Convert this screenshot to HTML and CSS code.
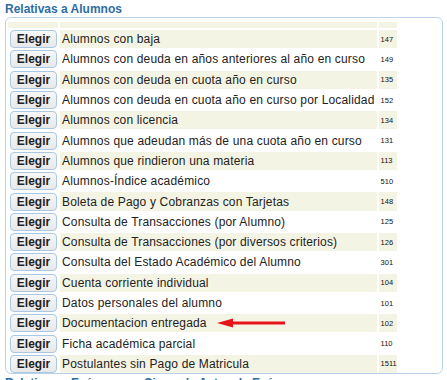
FILE: index.html
```html
<!DOCTYPE html>
<html lang="es">
<head>
  <meta charset="UTF-8" />
  <title>Reportes</title>
  <link rel="stylesheet" href="styles.css">
</head>
<body>
  <h3 class="group-title">Relativas a Alumnos</h3>
  <div class="group-box">
    <table class="report-list">
      <tr class="head"><th></th><th></th><th></th></tr>
      <tr class="odd"><td class="pick"><button>Elegir</button></td><td class="name">Alumnos con baja</td><td class="code">147</td></tr>
      <tr><td class="pick"><button>Elegir</button></td><td class="name">Alumnos con deuda en años anteriores al año en curso</td><td class="code">149</td></tr>
      <tr class="odd"><td class="pick"><button>Elegir</button></td><td class="name">Alumnos con deuda en cuota año en curso</td><td class="code">135</td></tr>
      <tr><td class="pick"><button>Elegir</button></td><td class="name">Alumnos con deuda en cuota año en curso por Localidad</td><td class="code">152</td></tr>
      <tr class="odd"><td class="pick"><button>Elegir</button></td><td class="name">Alumnos con licencia</td><td class="code">134</td></tr>
      <tr><td class="pick"><button>Elegir</button></td><td class="name">Alumnos que adeudan más de una cuota año en curso</td><td class="code">131</td></tr>
      <tr class="odd"><td class="pick"><button>Elegir</button></td><td class="name">Alumnos que rindieron una materia</td><td class="code">113</td></tr>
      <tr><td class="pick"><button>Elegir</button></td><td class="name">Alumnos-Índice académico</td><td class="code">510</td></tr>
      <tr class="odd"><td class="pick"><button>Elegir</button></td><td class="name">Boleta de Pago y Cobranzas con Tarjetas</td><td class="code">148</td></tr>
      <tr><td class="pick"><button>Elegir</button></td><td class="name">Consulta de Transacciones (por Alumno)</td><td class="code">125</td></tr>
      <tr class="odd"><td class="pick"><button>Elegir</button></td><td class="name">Consulta de Transacciones (por diversos criterios)</td><td class="code">126</td></tr>
      <tr><td class="pick"><button>Elegir</button></td><td class="name">Consulta del Estado Académico del Alumno</td><td class="code">301</td></tr>
      <tr class="odd"><td class="pick"><button>Elegir</button></td><td class="name">Cuenta corriente individual</td><td class="code">104</td></tr>
      <tr><td class="pick"><button>Elegir</button></td><td class="name">Datos personales del alumno</td><td class="code">101</td></tr>
      <tr class="odd"><td class="pick"><button>Elegir</button></td><td class="name">Documentacion entregada<svg class="arrow" width="68" height="10" viewBox="0 0 68 10"><polygon points="0,5 16,0.5 16,9.5" fill="#e8141a"/><rect x="14" y="3.5" width="54" height="3" fill="#e8141a"/></svg></td><td class="code">102</td></tr>
      <tr><td class="pick"><button>Elegir</button></td><td class="name">Ficha académica parcial</td><td class="code">110</td></tr>
      <tr class="odd"><td class="pick"><button>Elegir</button></td><td class="name">Postulantes sin Pago de Matricula</td><td class="code">1511</td></tr>
    </table>
  </div>
  <h3 class="group-title">Relativas a Exámenes y Cierre de Actas de Exámenes</h3>
</body>
</html>
```

FILE: styles.css
```css
body {
  margin: 0;
  padding: 0 4px 0 5px;
  font-family: "Liberation Sans", Arial, sans-serif;
  font-size: 12px;
  color: #222;
  background: #fff;
  overflow: hidden;
}

.group-title {
  margin: 0;
  padding-top: 2px;
  height: 15px;
  line-height: 15px;
  font-size: 12px;
  font-weight: bold;
  color: #2e6da4;
  white-space: nowrap;
}

.group-box {
  border: 1px solid #b9d3ea;
  border-radius: 6px;
  padding-top: 2px;
  height: 353px;
}

.report-list {
  border-spacing: 2px;
}

.report-list tr.head th {
  height: 6px;
  padding: 0;
  background: #f4f4e4;
}

.report-list td {
  padding: 0;
  height: 18.3px;
  white-space: nowrap;
}

.report-list tr.odd td.name,
.report-list tr.odd td.code {
  background: #f4f4e4;
}

td.pick {
  padding: 0 1px 0 2px;
}

td.pick button {
  display: block;
  width: 47px;
  height: 18px;
  padding: 0;
  border: 1px solid #a9c8e4;
  border-radius: 4px;
  background: linear-gradient(#f7f7f7, #e8e8e8);
  font-family: "Liberation Sans", Arial, sans-serif;
  font-size: 12px;
  font-weight: bold;
  color: #222;
  cursor: pointer;
}

td.name {
  padding: 0 2px 0 2px;
  letter-spacing: 0.17px;
}

td.code {
  width: 16px;
  padding: 0 0 0 2px;
  font-size: 7.5px;
  color: #111;
}

.arrow {
  vertical-align: middle;
  margin-left: 10px;
  margin-top: -2px;
}
```
